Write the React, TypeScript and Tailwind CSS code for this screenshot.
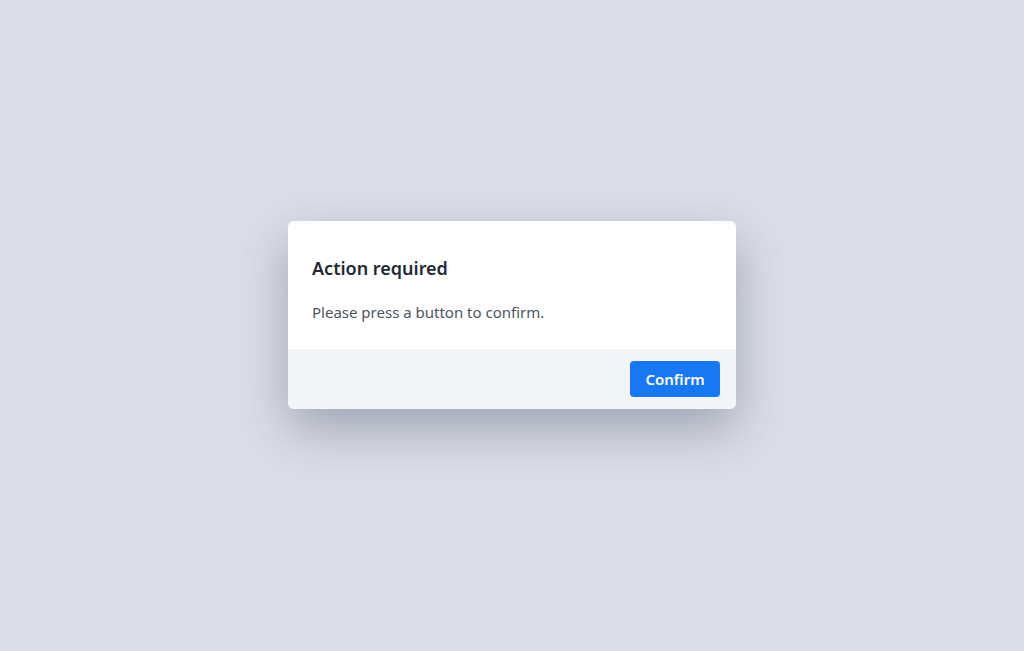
export default function App() {
  return (
    <div
      className="flex h-[651px] w-full items-center justify-center bg-[#dbdee6] pb-[21px]"
      style={{ fontFamily: '"Noto Sans", "Open Sans", sans-serif' }}
    >
      <div className="w-[448px] overflow-hidden rounded-md bg-white shadow-[0_20px_50px_rgba(60,72,100,0.38)]">
        <div className="px-6 pt-[33px] pb-[27px]">
          <h2 className="text-[18px] font-semibold leading-7 text-[#1f2937]">Action required</h2>
          <p className="mt-[20px] text-[15px] leading-5 text-[#4b5563]">Please press a button to confirm.</p>
        </div>
        <div className="flex justify-end bg-[#f3f4f6] px-4 py-3">
          <button className="h-9 w-[90px] rounded-[4px] bg-[#1877f2] text-[15px] font-semibold text-white">
            Confirm
          </button>
        </div>
      </div>
    </div>
  );
}
